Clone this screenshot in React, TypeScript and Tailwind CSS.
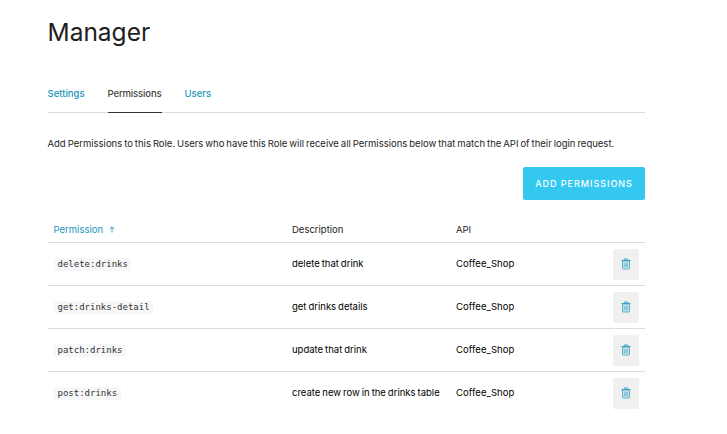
import React from "react";

const rows = [
  { permission: "delete:drinks", description: "delete that drink", api: "Coffee_Shop" },
  { permission: "get:drinks-detail", description: "get drinks details", api: "Coffee_Shop" },
  { permission: "patch:drinks", description: "update that drink", api: "Coffee_Shop" },
  { permission: "post:drinks", description: "create new row in the drinks table", api: "Coffee_Shop" },
];

function TrashIcon() {
  return (
    <svg width="10" height="12" viewBox="0 0 10 12" fill="none">
      <path d="M1.5 3h7v7.2a.8.8 0 0 1-.8.8H2.3a.8.8 0 0 1-.8-.8z" fill="#44a9c8" fillOpacity="0.25" stroke="#5cb5cf" strokeWidth="1" />
      <path d="M.5 2.5h9M3.3 2.2V1h3.4v1.2" stroke="#3ba5c5" strokeWidth="1" />
      <path d="M4 5.2v4M6 5.2v4" stroke="#3ba5c5" strokeWidth="0.8" />
    </svg>
  );
}

function SortArrow() {
  return (
    <svg width="6" height="7" viewBox="0 0 6 7" fill="none" stroke="#2b9dbd" strokeWidth="0.9">
      <path d="M3 6.6V.9M.6 3.2 3 .8l2.4 2.4" />
    </svg>
  );
}

export default function App() {
  return (
    <main className="h-[434px] w-[727px] overflow-hidden bg-white pl-[47.5px] font-['Inter',sans-serif] text-[9.5px] leading-4 text-[#1e1e1e] [word-spacing:-0.7px]">
      <div className="w-[597px]">
        <h1 className="pt-4 text-[24.5px] leading-[32px]">Manager</h1>

        <nav className="mt-[34px] flex h-[31px] gap-[23px] border-b border-[#dcdcdc] font-medium text-[#1a95bb]">
          <a className="pt-1">Settings</a>
          <a className="-mb-px h-[31px] w-[54px] border-b border-[#333] pt-1 tracking-[-0.13px] text-[#444]">Permissions</a>
          <a className="pt-1">Users</a>
        </nav>

        <p className="mt-[23px] whitespace-nowrap">
          Add Permissions to this Role. Users who have this Role will receive all Permissions below that match the API of their login request.
        </p>

        <div className="mt-[15px] flex justify-end">
          <button className="h-[33px] w-[122px] rounded-[2px] bg-[#34c8f0] pt-px pl-px text-[9px] font-medium tracking-[0.97px] text-white">
            ADD PERMISSIONS
          </button>
        </div>

        <div className="mt-[17px]">
          <div className="grid h-[26px] grid-cols-[238px_164px_1fr] items-center border-b border-[#dcdcdc] pl-[6px]">
            <span className="flex items-center gap-[6px] text-[#1a95bb]">
              Permission <SortArrow />
            </span>
            <span className="pl-[0.5px]">Description</span>
            <span className="pl-[0.5px]">API</span>
          </div>
          {rows.map((row) => (
            <div
              key={row.permission}
              className="grid h-[43px] grid-cols-[238px_164px_1fr_26px] items-center border-b border-[#dcdcdc] pl-[6.5px] pr-[5.5px] text-black last:h-[42px] last:border-b-0"
            >
              <span className="flex">
                <code className="h-[13px] rounded-[2px] bg-[#f6f7f8] px-[3.5px] font-['DejaVu_Sans_Mono',monospace] text-[9px] leading-[13px] text-[#333]">
                  {row.permission}
                </code>
              </span>
              <span className="whitespace-nowrap">{row.description}</span>
              <span className="tracking-[0.07px]">{row.api}</span>
              <button className="flex h-[31px] w-[26px] items-center justify-center rounded-[2px] bg-[#f0f0f0]">
                <TrashIcon />
              </button>
            </div>
          ))}
        </div>
      </div>
    </main>
  );
}
